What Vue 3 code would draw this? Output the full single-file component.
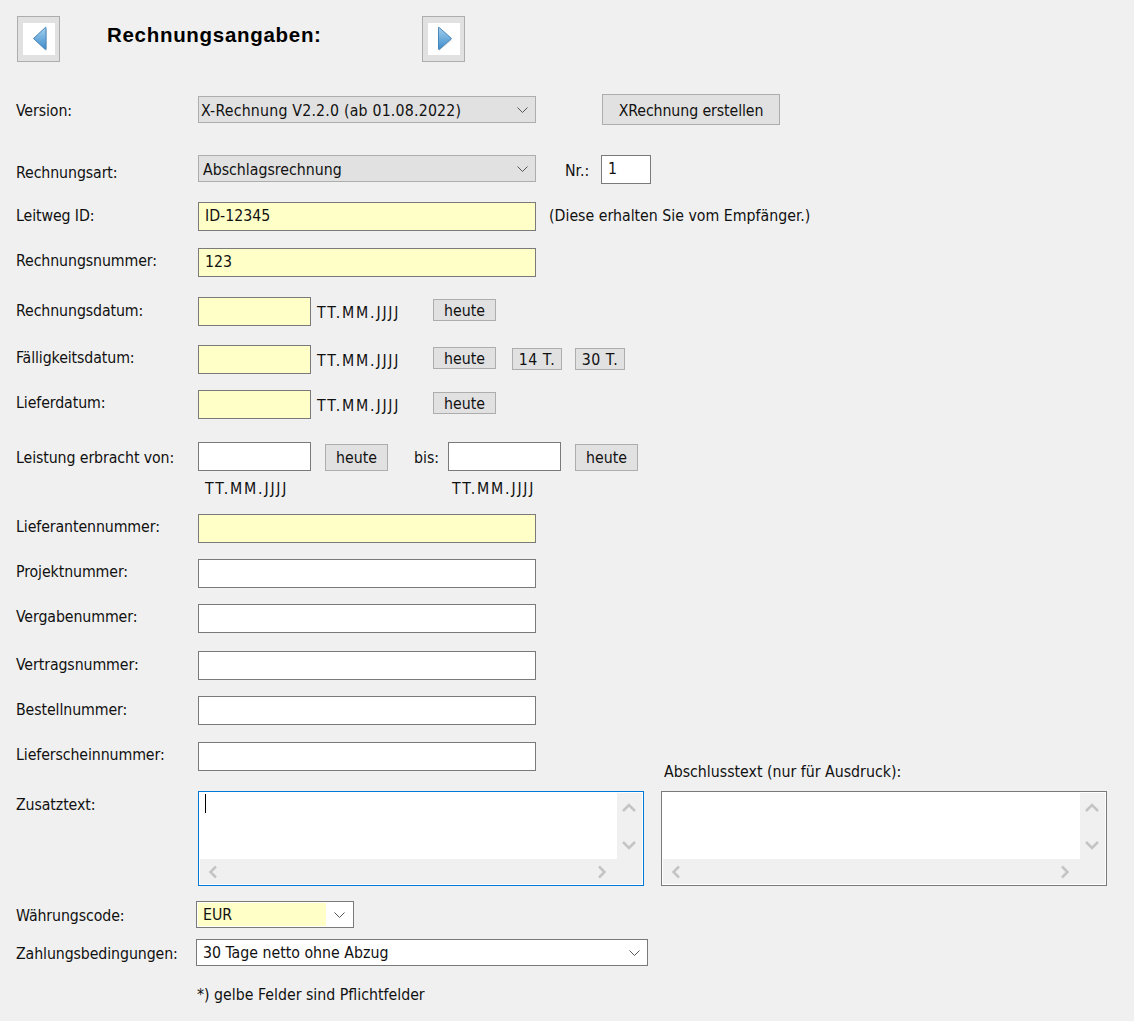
<template>
  <div class="page">
    <!-- Kopf mit Navigation -->
    <div class="head">
      <button class="nav-btn">
        <span class="nav-inner">
          <svg width="32" height="32" viewBox="0 0 32 32">
            <defs>
              <linearGradient id="arrowL" x1="0" y1="0" x2="0" y2="1">
                <stop offset="0" stop-color="#a5d0ee" />
                <stop offset="1" stop-color="#3c8ccb" />
              </linearGradient>
            </defs>
            <path d="M24 6v22L12 17z" fill="#b9c4cd" opacity=".6" />
            <path d="M23 4.500v21.500a.5.5 0 0 1-.8.4L10.500 15.500 22.200 4.600a.5.5 0 0 1 .8-.1z" fill="url(#arrowL)" stroke="#4b86b8" stroke-linejoin="round" />
          </svg>
        </span>
      </button>
      <h1 class="title">Rechnungsangaben:</h1>
      <button class="nav-btn">
        <span class="nav-inner">
          <svg width="32" height="32" viewBox="0 0 32 32">
            <defs>
              <linearGradient id="arrowR" x1="0" y1="0" x2="0" y2="1">
                <stop offset="0" stop-color="#a5d0ee" />
                <stop offset="1" stop-color="#3c8ccb" />
              </linearGradient>
            </defs>
            <path d="M11 6v22l13-11z" fill="#b9c4cd" opacity=".6" />
            <path d="M10.500 4.500v21.500a.5.5 0 0 0 .8.4l12.200-10.900L11.300 4.600a.5.5 0 0 0-.8-.1z" fill="url(#arrowR)" stroke="#4b86b8" stroke-linejoin="round" />
          </svg>
        </span>
      </button>
    </div>

    <div class="row r-version">
      <label class="lbl lt-7">Version:</label>
      <div class="select grey sel-wide mt-2">
        <span class="sel-text tight">X-Rechnung V2.2.0 (ab 01.08.2022)</span>
        <svg class="chev" width="11" height="6" viewBox="0 0 11 6"><path d="M.5.500l5 5 5-5" /></svg>
      </div>
      <button class="btn btn-create">XRechnung erstellen</button>
    </div>

    <div class="row r-art">
      <label class="lbl lt-8">Rechnungsart:</label>
      <div class="select grey sel-wide">
        <span class="sel-text">Abschlagsrechnung</span>
        <svg class="chev" width="11" height="6" viewBox="0 0 11 6"><path d="M.5.500l5 5 5-5" /></svg>
      </div>
      <span class="nr-label">Nr.:</span>
      <input class="inp inp-nr" value="1" />
    </div>

    <div class="row r-leitweg">
      <label class="lbl lt-4">Leitweg ID:</label>
      <input class="inp inp-wide req" value="ID-12345" />
      <span class="hint">(Diese erhalten Sie vom Empfänger.)</span>
    </div>

    <div class="row r-renr">
      <label class="lbl lt-3">Rechnungsnummer:</label>
      <input class="inp inp-wide req" value="123" />
    </div>

    <div class="row r-redat">
      <label class="lbl lt-4">Rechnungsdatum:</label>
      <input class="inp inp-date req" />
      <span class="fmt">TT.MM.JJJJ</span>
      <button class="btn btn-today">heute</button>
    </div>

    <div class="row r-faellig">
      <label class="lbl lt-3">Fälligkeitsdatum:</label>
      <input class="inp inp-date req" />
      <span class="fmt">TT.MM.JJJJ</span>
      <button class="btn btn-today">heute</button>
      <button class="btn btn-days first">14 T.</button>
      <button class="btn btn-days">30 T.</button>
    </div>

    <div class="row r-liefer">
      <label class="lbl lt-3">Lieferdatum:</label>
      <input class="inp inp-date req" />
      <span class="fmt">TT.MM.JJJJ</span>
      <button class="btn btn-today">heute</button>
    </div>

    <div class="row r-leistung">
      <label class="lbl lt-6">Leistung erbracht von:</label>
      <input class="inp inp-date" />
      <button class="btn btn-von">heute</button>
      <span class="bis">bis:</span>
      <input class="inp inp-date" />
      <button class="btn btn-bis">heute</button>
    </div>
    <div class="row r-leistung-fmt">
      <span class="fmt-von">TT.MM.JJJJ</span>
      <span class="fmt-bis">TT.MM.JJJJ</span>
    </div>

    <div v-for="f in numberFields" :key="f.label" class="row" :class="f.cls">
      <label class="lbl lt-3">{{ f.label }}</label>
      <input class="inp inp-wide" :class="{ req: f.required }" />
    </div>

    <!-- Textfelder -->
    <div class="row r-text">
      <label class="lbl lt-4">Zusatztext:</label>
      <div class="memo focus">
        <div class="memo-top">
          <div class="memo-area"><i class="caret"></i></div>
          <div class="scroll-v">
            <svg width="14" height="9" viewBox="0 0 14 9"><path d="M1 8l6-6 6 6" /></svg>
            <svg width="14" height="9" viewBox="0 0 14 9"><path d="M1 1l6 6 6-6" /></svg>
          </div>
        </div>
        <div class="scroll-h">
          <svg width="9" height="14" viewBox="0 0 9 14"><path d="M8 1.500L2.500 7 8 12.500" /></svg>
          <svg width="9" height="14" viewBox="0 0 9 14"><path d="M1 1.500L6.500 7 1 12.500" /></svg>
        </div>
      </div>
      <div class="memo-col">
        <span class="memo-title">Abschlusstext (nur für Ausdruck):</span>
        <div class="memo">
          <div class="memo-top">
            <div class="memo-area"></div>
            <div class="scroll-v">
              <svg width="14" height="9" viewBox="0 0 14 9"><path d="M1 8l6-6 6 6" /></svg>
              <svg width="14" height="9" viewBox="0 0 14 9"><path d="M1 1l6 6 6-6" /></svg>
            </div>
          </div>
          <div class="scroll-h">
            <svg width="9" height="14" viewBox="0 0 9 14"><path d="M8 1.500L2.500 7 8 12.500" /></svg>
            <svg width="9" height="14" viewBox="0 0 9 14"><path d="M1 1.500L6.500 7 1 12.500" /></svg>
          </div>
        </div>
      </div>
    </div>

    <div class="row r-waehrung">
      <label class="lbl lbl-narrow lt-5">Währungscode:</label>
      <div class="select sel-cur">
        <span class="sel-yellow">EUR</span>
        <svg class="chev" width="11" height="6" viewBox="0 0 11 6"><path d="M.5.500l5 5 5-5" /></svg>
      </div>
    </div>

    <div class="row r-zahlung">
      <label class="lbl lbl-narrow lt-5">Zahlungsbedingungen:</label>
      <div class="select sel-pay">
        <span class="sel-text">30 Tage netto ohne Abzug</span>
        <svg class="chev" width="11" height="6" viewBox="0 0 11 6"><path d="M.5.500l5 5 5-5" /></svg>
      </div>
    </div>

    <p class="note">*) gelbe Felder sind Pflichtfelder</p>
  </div>
</template>

<script setup>
const numberFields = [
  { label: 'Lieferantennummer:', cls: 'r-n1', required: true },
  { label: 'Projektnummer:', cls: 'r-n2' },
  { label: 'Vergabenummer:', cls: 'r-n3' },
  { label: 'Vertragsnummer:', cls: 'r-n4' },
  { label: 'Bestellnummer:', cls: 'r-n5' },
  { label: 'Lieferscheinnummer:', cls: 'r-n6' }
]
</script>

<style>
html,
body {
  margin: 0;
  background: #f0f0f0;
}
</style>

<style scoped>
.page {
  width: 1134px;
  height: 1021px;
  overflow: hidden;
  box-sizing: border-box;
  padding: 16px 0 0 16px;
  background: #f0f0f0;
  color: #111;
  font-family: "DejaVu Sans", sans-serif;
  font-stretch: condensed;
  font-size: 15.75px;
  line-height: 19px;
}

/* Kopf */
.head {
  display: flex;
  align-items: flex-start;
  padding-left: 1px;
  height: 46px;
}

.nav-btn {
  box-sizing: border-box;
  width: 43px;
  height: 46px;
  padding: 0;
  border: 1px solid #adadad;
  background: #e1e1e1;
  display: flex;
  align-items: center;
  justify-content: center;
}

.nav-inner {
  display: block;
  width: 32px;
  height: 32px;
  background: #fff;
}

.title {
  width: 315px;
  margin: 7px 0 0 47px;
  font-family: "Liberation Sans", Arial, sans-serif;
  font-size: 20.5px;
  line-height: 24px;
  font-weight: bold;
  font-stretch: normal;
  letter-spacing: 0.7px;
  white-space: nowrap;
  color: #000;
}

/* Zeilen */
.row {
  display: flex;
  align-items: flex-start;
}

.r-version { margin-top: 32px; }
.r-art { margin-top: 30px; }
.r-leitweg { margin-top: 18px; }
.r-renr { margin-top: 17px; }
.r-redat { margin-top: 20px; }
.r-faellig { margin-top: 19px; }
.r-liefer { margin-top: 16px; }
.r-leistung { margin-top: 23px; }
.r-leistung-fmt { margin-top: 8px; height: 18px; }
.r-n1 { margin-top: 17px; }
.r-n2 { margin-top: 16px; }
.r-n3 { margin-top: 16px; }
.r-n4 { margin-top: 18px; }
.r-n5 { margin-top: 16px; }
.r-n6 { margin-top: 17px; }
.r-text { margin-top: 20px; }
.r-waehrung { margin-top: 15px; }
.r-zahlung { margin-top: 11px; }

.r-n4 .lbl,
.r-n5 .lbl { padding-top: 4px; }

.lbl {
  display: block;
  width: 182px;
  flex: none;
  white-space: nowrap;
  letter-spacing: -0.1px;
}

.lbl-narrow { width: 180px; }
.lt-3 { padding-top: 3px; }
.lt-4 { padding-top: 4px; }
.lt-5 { padding-top: 5px; }
.lt-6 { padding-top: 6px; }
.lt-7 { padding-top: 7px; }
.lt-8 { padding-top: 8px; }
.mt-2 { margin-top: 2px; }

/* Eingabefelder */
.inp {
  box-sizing: border-box;
  height: 29px;
  padding: 0 6px 3px;
  border: 1px solid #7a7a7a;
  border-radius: 0;
  outline: none;
  background: #fff;
  color: #111;
  font: inherit;
  flex: none;
}

.req { background: #ffffc8; }
.inp-wide { width: 338px; }
.inp-date { width: 113px; }
.inp-nr { width: 50px; }

/* Auswahllisten */
.select {
  box-sizing: border-box;
  height: 27px;
  display: flex;
  align-items: center;
  justify-content: space-between;
  border: 1px solid #7a7a7a;
  background: #fff;
  flex: none;
}

.select.grey {
  border-color: #adadad;
  background: #e1e1e1;
}

.sel-wide { width: 338px; }
.sel-text { padding: 2px 0 0 4px; white-space: nowrap; }
.sel-text.tight { padding-left: 2px; letter-spacing: 0.2px; }
.chev {
  margin-right: 7px;
  fill: none;
  stroke: #555;
  stroke-width: 1;
}

.sel-pay .sel-text { padding: 0 0 0 6px; }
.sel-cur { width: 158px; padding: 1px; }
.sel-pay { width: 452px; }
.sel-yellow {
  width: 123px;
  height: 23px;
  padding-left: 5px;
  background: #ffffc8;
  line-height: 23px;
}

/* Schaltflaechen */
.btn {
  box-sizing: border-box;
  padding: 0;
  border: 1px solid #adadad;
  border-radius: 0;
  background: #e1e1e1;
  color: #111;
  font: inherit;
  flex: none;
}

.btn-create {
  width: 178px;
  height: 31px;
  margin-left: 66px;
  padding-top: 2px;
  letter-spacing: -0.1px;
}

.btn-today {
  width: 63px;
  height: 22px;
  margin: 2px 0 0 34px;
}

.btn-days {
  width: 50px;
  height: 22px;
  margin: 3px 0 0 13px;
  letter-spacing: 0.5px;
}

.btn-days.first { margin-left: 16px; }

.btn-von,
.btn-bis {
  width: 63px;
  height: 27px;
  margin: 2px 0 0 14px;
}

.btn-von { margin-right: 26px; }

.nr-label { width: 36px; margin: 6px 0 0 29px; flex: none; }
.hint { margin: 4px 0 0 13px; white-space: nowrap; }
.fmt,
.fmt-von,
.fmt-bis { letter-spacing: 1.8px; white-space: nowrap; }
.fmt { width: 88px; margin: 6px 0 0 6px; flex: none; }
.fmt + .btn-today { margin-left: 28px; }
.bis { width: 34px; margin-top: 6px; }
.fmt-von { margin-left: 189px; width: 247px; }

/* Mehrzeilige Felder */
.memo-col {
  display: flex;
  flex-direction: column;
  margin: -30px 0 0 17px;
}

.memo-title {
  box-sizing: border-box;
  height: 30px;
  margin-left: 3px;
  padding-top: 1px;
  white-space: nowrap;
}

.memo {
  box-sizing: border-box;
  width: 446px;
  height: 95px;
  padding: 0 1px 1px 0;
  border: 1px solid #7a7a7a;
  display: flex;
  flex-direction: column;
  background: #fff;
}

.memo.focus { border-color: #0078d7; }

.memo-top {
  display: flex;
  height: 67px;
}

.memo-area {
  flex: 1;
  background: #fff;
}

.caret {
  display: block;
  width: 1px;
  height: 19px;
  margin: 2px 0 0 6px;
  background: #000;
}

.scroll-v {
  box-sizing: border-box;
  width: 25px;
  margin-top: 1px;
  padding: 10px 0 9px 5px;
  display: flex;
  flex-direction: column;
  justify-content: space-between;
  background: #f0f0f0;
}

.scroll-h {
  box-sizing: border-box;
  height: 25px;
  margin-left: 1px;
  padding: 0 35px 0 8px;
  display: flex;
  align-items: center;
  justify-content: space-between;
  background: #f0f0f0;
}

.scroll-v svg,
.scroll-h svg {
  fill: none;
  stroke: #c4c4c4;
  stroke-width: 2.5;
}

.note {
  margin: 19px 0 0 181px;
}
</style>
